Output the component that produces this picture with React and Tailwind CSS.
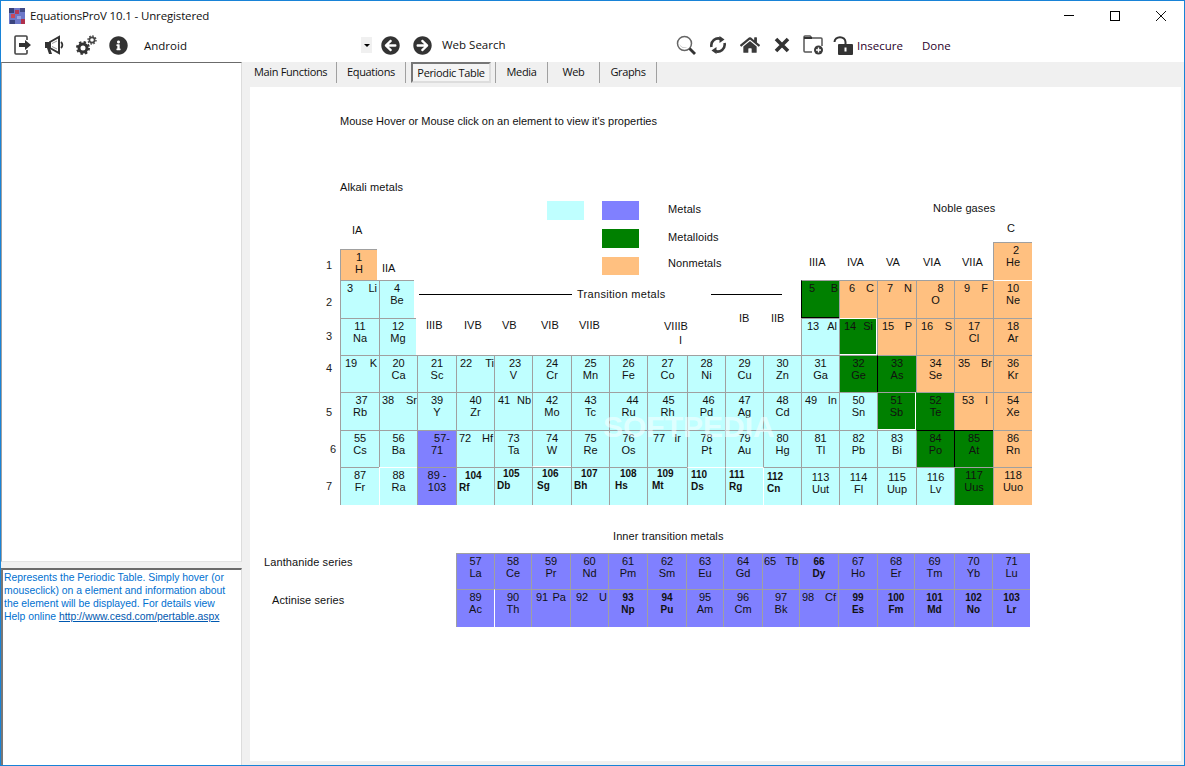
import React from 'react';
import { FaInfoCircle, FaArrowCircleLeft, FaArrowCircleRight, FaHome } from 'react-icons/fa';

const CY = 'bg-[#bfffff]';
const PU = 'bg-[#8080ff]';
const GR = 'bg-[#008000]';
const PE = 'bg-[#ffc080]';

// kinds: default = number over symbol, split = same line, bold = small bold
const c = (n, s, color, kind = '', extra = '', num = '', sym = '') => ({ n, s, color, kind, extra, num, sym });

const Cell = ({ n, s, color, kind, extra, num = '', sym = '' }) => {
  if (kind === 'split') {
    return (
      <div className={`${color} h-full flex justify-between border-t border-l border-[#a0a0a0] pt-px leading-[12px] ${extra}`}>
        <span>{n}</span>
        <span>{s}</span>
      </div>
    );
  }
  if (kind === 'bold') {
    return (
      <div className={`${color} h-full border-t border-l border-[#a0a0a0] pt-[2px] text-[10px] font-bold leading-[12px] ${extra}`}>
        <div className={num}>{n}</div>
        <div className={sym}>{s}</div>
      </div>
    );
  }
  return (
    <div className={`${color} h-full border-t border-l border-[#a0a0a0] pt-px text-center leading-[12px] ${extra}`}>
      <div className={num}>{n}</div>
      <div>{s}</div>
    </div>
  );
};

const RowLabel = ({ children, className }) => (
  <div className={`pl-[6px] text-[#222] ${className}`}>{children}</div>
);

const row2 = [c(3, 'Li', CY, 'split', 'pl-[6px] pr-[2px]'), c(4, 'Be', CY, '', 'w-[35px]')];
const row2r = [
  c(5, 'B', GR, 'split', 'pl-[7px] pr-px border-l-black border-b border-b-black'),
  c(6, 'C', PE, 'split', 'pl-[9px] pr-[3px]'),
  c(7, 'N', PE, 'split', 'pl-[9px] pr-[4px]'),
  c(8, 'O', PE, '', '', 'pl-[10px]'),
  c(9, 'F', PE, 'split', 'pl-[9px] pr-[5px]'),
  c(10, 'Ne', PE, '', 'border-t-white'),
];
const row3 = [c(11, 'Na', CY), c(12, 'Mg', CY, '', 'w-[37px]')];
const row3r = [
  c(13, 'Al', CY, 'split', 'pl-[5px] pr-[2px]'),
  c(14, 'Si', GR, 'split', 'pl-[4px] pr-[3px] border-t-white border-r border-r-white border-b border-b-white'),
  c(15, 'P', PE, 'split', 'pl-[4px] pr-[4px]'),
  c(16, 'S', PE, 'split', 'pl-[4px] pr-[2px]'),
  c(17, 'Cl', PE),
  c(18, 'Ar', PE),
];
const row4 = [
  c(19, 'K', CY, 'split', 'pl-[4px] pr-[2px]'), c(20, 'Ca', CY), c(21, 'Sc', CY), c(22, 'Ti', CY, 'split', 'pl-[3px]'), c(23, 'V', CY, '', '', 'pl-[3px]'), c(24, 'Cr', CY),
  c(25, 'Mn', CY), c(26, 'Fe', CY), c(27, 'Co', CY), c(28, 'Ni', CY), c(29, 'Cu', CY), c(30, 'Zn', CY), c(31, 'Ga', CY),
  c(32, 'Ge', GR), c(33, 'As', GR, '', 'border-l-black'), c(34, 'Se', PE), c(35, 'Br', PE, 'split', 'pl-[3px] pr-px'), c(36, 'Kr', PE),
];
const row5 = [
  c(37, 'Rb', CY, '', '', 'pl-[3px]'), c(38, 'Sr', CY, 'split', 'pl-[2px]'), c(39, 'Y', CY), c(40, 'Zr', CY), c(41, 'Nb', CY, 'split', 'pl-[3px] pr-px'), c(42, 'Mo', CY),
  c(43, 'Tc', CY), c(44, 'Ru', CY, '', '', 'pl-[8px]'), c(45, 'Rh', CY, '', '', 'pl-[2px]'), c(46, 'Pd', CY, '', '', 'pl-[4px]'), c(47, 'Ag', CY), c(48, 'Cd', CY), c(49, 'In', CY, 'split', 'pl-[3px] pr-[2px]'),
  c(50, 'Sn', CY), c(51, 'Sb', GR, '', 'border-r border-r-white border-b border-b-white'), c(52, 'Te', GR, '', 'border-l-transparent'),
  c(53, 'I', PE, 'split', 'pl-[7px] pr-[5px]'), c(54, 'Xe', PE),
];
const row6 = [
  c(55, 'Cs', CY), c(56, 'Ba', CY), c('57-', '71', PU, '', '', 'pl-[10px]'), c(72, 'Hf', CY, 'split', 'pl-[2px] pr-px'), c(73, 'Ta', CY), c(74, 'W', CY, '', 'border-b border-b-white'),
  c(75, 'Re', CY), c(76, 'Os', CY), c(77, 'Ir', CY, 'split', 'pl-[5px] pr-[6px]'), c(78, 'Pt', CY), c(79, 'Au', CY), c(80, 'Hg', CY), c(81, 'Tl', CY),
  c(82, 'Pb', CY), c(83, 'Bi', CY), c(84, 'Po', GR, '', 'border-t-black'), c(85, 'At', GR, '', 'border-t-black border-l-black'), c(86, 'Rn', PE),
];
const row7 = [
  c(87, 'Fr', CY), c(88, 'Ra', CY, '', 'border-l-white border-t-white'), c('89 -', '103', PU),
  c(104, 'Rf', CY, 'bold', '', 'pl-[8px]', 'pl-[2px]'),
  c(105, 'Db', CY, 'bold', 'pt-0!', 'pl-[8px]', 'pl-[2px]'),
  c(106, 'Sg', CY, 'bold', 'pt-0!', 'pl-[9px]', 'pl-[4px]'),
  c(107, 'Bh', CY, 'bold', 'pt-0!', 'pl-[9px]', 'pl-[2px]'),
  c(108, 'Hs', CY, 'bold', 'pt-0!', 'pl-[10px]', 'pl-[5px]'),
  c(109, 'Mt', CY, 'bold', 'pt-0!', 'pl-[9px]', 'pl-[4px]'),
  c(110, 'Ds', CY, 'bold', 'pt-px! border-t-white', 'pl-[3px]', 'pl-[3px]'),
  c(111, 'Rg', CY, 'bold', 'pt-px! border-t-white', 'pl-[3px]', 'pl-[3px]'),
  c(112, 'Cn', CY, 'bold', 'pt-[3px]! border-l-white', 'pl-[3px]', 'pl-[3px]'),
  c(113, 'Uut', CY, '', 'pt-[3px]!'), c(114, 'Fl', CY, '', 'pt-[3px]!'), c(115, 'Uup', CY, '', 'pt-[3px]!'), c(116, 'Lv', CY, '', 'pt-[3px]!'), c(117, 'Uus', GR), c(118, 'Uuo', PE),
];

const lanth = [
  c(57, 'La', PU), c(58, 'Ce', PU), c(59, 'Pr', PU), c(60, 'Nd', PU), c(61, 'Pm', PU), c(62, 'Sm', PU), c(63, 'Eu', PU), c(64, 'Gd', PU),
  c(65, 'Tb', PU, 'split', 'pl-px pr-px'), c(66, 'Dy', PU, 'bold', 'text-center'), c(67, 'Ho', PU), c(68, 'Er', PU), c(69, 'Tm', PU), c(70, 'Yb', PU), c(71, 'Lu', PU),
];
const actin = [
  c(89, 'Ac', PU), c(90, 'Th', PU, '', 'border-l-white'), c(91, 'Pa', PU, 'split', 'pl-[4px] pr-[4px]'), c(92, 'U', PU, 'split', 'pl-[5px] pr-px'), c(93, 'Np', PU, 'bold', 'text-center'),
  c(94, 'Pu', PU, 'bold', 'text-center'), c(95, 'Am', PU), c(96, 'Cm', PU), c(97, 'Bk', PU), c(98, 'Cf', PU, 'split', 'pl-[2px] pr-[2px]'),
  c(99, 'Es', PU, 'bold', 'text-center'), c(100, 'Fm', PU, 'bold', 'text-center'), c(101, 'Md', PU, 'bold', 'text-center'), c(102, 'No', PU, 'bold', 'text-center'), c(103, 'Lr', PU, 'bold', 'text-center'),
];

const ExitIcon = () => (
  <svg className="shrink-0" width="18" height="20" viewBox="0 0 18 20" fill="none">
    <path d="M13 5V2a1 1 0 0 0-1-1H2a1 1 0 0 0-1 1v16a1 1 0 0 0 1 1h10a1 1 0 0 0 1-1v-3" stroke="#444" strokeWidth="1.6" />
    <path d="M5 8h6V5l6 5-6 5v-3H5z" fill="#333" />
  </svg>
);

const HornIcon = () => (
  <svg className="shrink-0" width="20" height="20" viewBox="0 0 20 20" fill="none">
    <path d="M1 7h5v6H1z" fill="#333" />
    <path d="M6 7l9-5v16l-9-5z" stroke="#333" strokeWidth="2" fill="#fff" />
    <path d="M8 8.5l5-2.5M8 11.5l5 2.5" stroke="#999" strokeWidth="1" />
    <path d="M3 13l2 6h3l-2-6z" fill="#333" />
    <path d="M17 7a4 4 0 0 1 0 6" stroke="#333" strokeWidth="1.8" />
  </svg>
);

const GearsIcon = () => (
  <svg className="shrink-0" width="21" height="20" viewBox="0 0 21 20" fill="none">
    <circle cx="7" cy="13" r="4" stroke="#333" strokeWidth="3" />
    <circle cx="7" cy="13" r="6" stroke="#333" strokeWidth="2" strokeDasharray="2.4 2.3" />
    <circle cx="16" cy="5" r="2.6" stroke="#444" strokeWidth="1.6" />
    <circle cx="16" cy="5" r="4" stroke="#444" strokeWidth="1.4" strokeDasharray="1.6 1.5" />
  </svg>
);

const SearchIcon = () => (
  <svg className="shrink-0" width="20" height="20" viewBox="0 0 20 20" fill="none">
    <circle cx="8.5" cy="8.5" r="7" stroke="#666" strokeWidth="1.5" />
    <path d="M3.5 9a5 5 0 0 0 8 3a6 6 0 0 1-8-3z" fill="#aaa" />
    <path d="M13.5 13.5L19 19" stroke="#333" strokeWidth="2.8" />
  </svg>
);

const SyncIcon = () => (
  <svg className="shrink-0" width="18" height="18" viewBox="0 0 18 18" fill="none">
    <path d="M2.5 11A7 7 0 0 1 12 3" stroke="#3a3a3a" strokeWidth="2.6" />
    <path d="M10.5 0l5 3.5-5 3.5z" fill="#3a3a3a" />
    <path d="M15.5 7A7 7 0 0 1 6 15" stroke="#3a3a3a" strokeWidth="2.6" />
    <path d="M7.5 18l-5-3.5 5-3.5z" fill="#3a3a3a" />
  </svg>
);

const CrossIcon = () => (
  <svg className="shrink-0" width="16" height="16" viewBox="0 0 16 16" fill="none">
    <path d="M2 2l12 12M14 2L2 14" stroke="#333" strokeWidth="3.6" />
  </svg>
);

const FolderPlusIcon = () => (
  <svg className="shrink-0" width="21" height="20" viewBox="0 0 21 20" fill="none">
    <path d="M9 17H2a1 1 0 0 1-1-1V2a1 1 0 0 1 1-1h5l2 2h9a1 1 0 0 1 1 1v7" stroke="#555" strokeWidth="1.5" />
    <path d="M1 3h8" stroke="#333" strokeWidth="2" />
    <circle cx="15.5" cy="15" r="4.5" fill="#3a3a3a" />
    <path d="M13 15h5M15.5 12.5v5" stroke="#fff" strokeWidth="1.4" />
  </svg>
);

const UnlockIcon = () => (
  <svg className="shrink-0" width="20" height="19" viewBox="0 0 20 19" fill="none">
    <path d="M1.5 6A5.5 4.8 0 0 1 12.5 6V8" stroke="#333" strokeWidth="2" />
    <rect x="5" y="8" width="15" height="11" rx="1" fill="#333" />
    <rect x="11.5" y="11.5" width="2" height="4" fill="#fff" />
  </svg>
);

const AppLogo = () => (
  <svg width="16" height="16" viewBox="0 0 16 16">
    <rect width="16" height="16" fill="#6d78c8" />
    <rect x="0" y="0" width="5" height="5" fill="#37417a" />
    <rect x="6" y="2" width="4" height="4" fill="#b23a58" />
    <rect x="11" y="0" width="5" height="4" fill="#404a86" />
    <rect x="2" y="6" width="4" height="4" fill="#c8475a" />
    <rect x="8" y="8" width="4" height="3" fill="#9aa2e0" />
    <rect x="12" y="11" width="4" height="5" fill="#b0304c" />
    <rect x="1" y="12" width="5" height="4" fill="#3a447e" />
  </svg>
);

export default function App() {
  return (
    <div className="w-[1185px] h-[766px] overflow-hidden bg-white border border-[#1883d7] flex flex-col font-['Open_Sans',sans-serif] text-[11.5px] text-[#111]">
      {/* title bar */}
      <div className="h-[29px] shrink-0 flex items-center">
        <div className="ml-[8px]"><AppLogo /></div>
        <span className="ml-[5px] tracking-[-0.15px]">EquationsProV 10.1 - Unregistered</span>
        <div className="ml-auto flex items-center h-full">
          <div className="w-[46px] flex justify-center"><div className="w-[10px] h-px bg-black" /></div>
          <div className="w-[46px] flex justify-center"><div className="w-[10px] h-[10px] border border-black" /></div>
          <div className="w-[46px] flex justify-center">
            <svg width="10" height="10" viewBox="0 0 10 10"><path d="M0 0l10 10M10 0L0 10" stroke="#111" strokeWidth="1" /></svg>
          </div>
        </div>
      </div>

      {/* toolbar */}
      <div className="h-[32px] shrink-0 flex items-center pb-[2px]">
        <div className="ml-[13px] w-[18px]"><ExitIcon /></div>
        <div className="ml-[12px]"><HornIcon /></div>
        <div className="ml-[12px]"><GearsIcon /></div>
        <FaInfoCircle className="ml-[12px] shrink-0 text-[#333] text-[19px]" />
        <span className="ml-[16px] mt-[2px] w-[80px]">Android</span>
        <div className="ml-[137px] w-[11px] h-[16px] bg-[#f0f0f0] flex items-center justify-center">
          <div className="border-x-[3px] border-x-transparent border-t-[3px] border-t-black" />
        </div>
        <FaArrowCircleLeft className="ml-[9px] shrink-0 text-[#333] text-[19px]" />
        <FaArrowCircleRight className="ml-[13px] shrink-0 text-[#333] text-[19px]" />
        <span className="ml-[10px] w-[234px]">Web Search</span>
        <SearchIcon />
        <div className="ml-[13px]"><SyncIcon /></div>
        <FaHome className="ml-[13px] shrink-0 text-[#3a3a3a] text-[20px]" />
        <div className="ml-[14px]"><CrossIcon /></div>
        <div className="ml-[13px]"><FolderPlusIcon /></div>
        <div className="ml-[9px]"><UnlockIcon /></div>
        <span className="ml-[4px] mt-[2px] w-[44px] text-[#2a002a]">Insecure</span>
        <span className="ml-[21px] mt-[2px] text-[#2a002a]">Done</span>
      </div>

      {/* body */}
      <div className="flex-1 min-h-0 flex bg-[#f0f0f0]">
        {/* left panels */}
        <div className="w-[241px] shrink-0 flex flex-col">
          <div className="h-[500px] bg-white border-t border-t-[#6b6b6b] border-l border-l-[#a0a0a0] border-r border-r-[#dcdcdc] border-b border-b-[#e3e3e3]" />
          <div className="h-[6px]" />
          <div className="flex-1 bg-white border-t-2 border-t-[#6b6b6b] border-l-2 border-l-[#777] border-r border-r-[#dcdcdc] pl-px pr-[12px] pt-px font-['Liberation_Sans',sans-serif] text-[10.4px] leading-[13px] text-[#0070d0]">
            <p>Represents the Periodic Table. Simply hover (or mouseclick) on a element and information about the element will be displayed. For details view Help online <a className="underline text-[#0058b0]">http://www.cesd.com/pertable.aspx</a></p>
          </div>
        </div>

        {/* right side */}
        <div className="flex-1 min-w-0 flex flex-col pl-[3px] pb-[4px]">
          <div className="h-[25px] shrink-0 flex items-start text-[11px] leading-[20px] text-[#111] tracking-[-0.35px]">
            <div className="w-[92px] h-[21px] pl-[9px] border-r border-r-[#a0a0a0]">Main Functions</div>
            <div className="w-[69px] h-[21px] text-center border-r border-r-[#a0a0a0]">Equations</div>
            <div className="ml-[5px] w-[80px] h-[21px] text-center bg-[#f4f4f4] border-2 border-t-[#777] border-l-[#777] border-r-[#ddd] border-b-[#ddd] leading-[18px]">Periodic Table</div>
            <div className="ml-[4px] w-[53px] h-[21px] text-center border-l border-r border-[#a0a0a0]">Media</div>
            <div className="w-[52px] h-[21px] text-center border-r border-r-[#a0a0a0]">Web</div>
            <div className="w-[57px] h-[21px] text-center border-r border-r-[#a0a0a0]">Graphs</div>
          </div>

          <div className="relative flex-1 ml-[5px] mr-[3px] bg-white font-['Liberation_Sans',sans-serif] text-[11px] leading-[12px] text-[#111]">
            <div className="pl-[90px] pt-[28px]">Mouse Hover or Mouse click on an element to view it's properties</div>
            <div className="pl-[90px] pt-[54px] tracking-[0.1px]">Alkali metals</div>

            {/* top band: IA/H, legend, right hand labels and He */}
            <div className="ml-[70px] mt-[8px] w-[712px] h-[79px] flex">
              <div className="w-[97px] grid grid-cols-[20px_39px_38px] grid-rows-[48px_31px]">
                <div />
                <div className="pt-[23px] pl-[12px]">IA</div>
                <div />
                <RowLabel className="pt-[10px]">1</RowLabel>
                <Cell n={1} s="H" color={PE} kind="" extra="w-[37px]" />
                <div className="pt-[13px] pl-[3px]">IIA</div>
              </div>

              <div className="ml-[130px] flex">
                <div className={`w-[37px] h-[19px] ${CY}`} />
                <div className="ml-[18px] flex flex-col gap-[9px]">
                  <div className="flex h-[19px] items-center">
                    <div className={`w-[37px] h-[19px] ${PU}`} />
                    <span className="ml-[29px] -mt-[3px] tracking-[0.1px]">Metals</span>
                  </div>
                  <div className="flex h-[19px] items-center">
                    <div className={`w-[37px] h-[19px] ${GR}`} />
                    <span className="ml-[29px] -mt-[4px] tracking-[0.1px]">Metalloids</span>
                  </div>
                  <div className="flex h-[18px] items-center">
                    <div className={`w-[37px] h-[18px] ${PE}`} />
                    <span className="ml-[29px] -mt-[7px] tracking-[0.1px]">Nonmetals</span>
                  </div>
                </div>
              </div>

              <div className="ml-auto w-[231px] flex flex-col">
                <div className="h-[41px]">
                  <div className="pl-[132px] pt-[1px] tracking-[0.1px]">Noble gases</div>
                  <div className="pl-[206px] pt-[8px]">C</div>
                </div>
                <div className="h-[38px] flex">
                  <div className="w-[192px] flex pt-[14px]">
                    <span className="ml-[8px] w-[18px]">IIIA</span>
                    <span className="ml-[20px] w-[18px]">IVA</span>
                    <span className="ml-[21px] w-[16px]">VA</span>
                    <span className="ml-[21px] w-[18px]">VIA</span>
                    <span className="ml-[21px] w-[20px]">VIIA</span>
                  </div>
                  <div className="w-[39px]"><Cell n={2} s="He" color={PE} kind="" extra="" num="pl-[6px]" /></div>
                </div>
              </div>
            </div>

            {/* main table */}
            <div className="ml-[70px] grid grid-cols-[20px_39px_38px_39px_38px_38px_39px_38px_38px_40px_38px_38px_38px_38px_38px_39px_38px_39px_39px] grid-rows-[38px_37px_37px_38px_37px_38px] w-[712px]">
              <RowLabel className="pt-[16px]">2</RowLabel>
              {row2.map((x) => <Cell key={x.n} {...x} />)}
              <div className="col-span-10 row-span-2 flex flex-col">
                <div className="h-[28px] flex items-center pl-[2px]">
                  <div className="w-[153px] h-px bg-black" />
                  <span className="ml-[5px] w-[134px] tracking-[0.3px]">Transition metals</span>
                  <div className="w-[71px] h-px bg-black" />
                </div>
                <div className="flex">
                  <span className="ml-[9px] w-[16px] pt-[11px]">IIIB</span>
                  <span className="ml-[22px] w-[17px] pt-[11px]">IVB</span>
                  <span className="ml-[21px] w-[15px] pt-[11px]">VB</span>
                  <span className="ml-[24px] w-[17px] pt-[11px]">VIB</span>
                  <span className="ml-[21px] w-[20px] pt-[11px]">VIIB</span>
                  <div className="ml-[65px] w-[24px] pt-[11px] leading-[14px]">VIIIB<div className="pl-[15px]">I</div></div>
                  <span className="ml-[51px] w-[11px] pt-[4px]">IB</span>
                  <span className="ml-[21px] w-[14px] pt-[4px]">IIB</span>
                </div>
              </div>
              {row2r.map((x) => <Cell key={x.n} {...x} />)}

              <RowLabel className="pt-[12px]">3</RowLabel>
              {row3.map((x) => <Cell key={x.n} {...x} />)}
              {row3r.map((x) => <Cell key={x.n} {...x} />)}

              <RowLabel className="pt-[7px]">4</RowLabel>
              {row4.map((x) => <Cell key={x.n} {...x} />)}
              <RowLabel className="pt-[14px]">5</RowLabel>
              {row5.map((x) => <Cell key={x.n} {...x} />)}
              <RowLabel className="pt-[13px] pl-[10px]">6</RowLabel>
              {row6.map((x) => <Cell key={x.n} {...x} />)}
              <RowLabel className="pt-[13px]">7</RowLabel>
              {row7.map((x) => <Cell key={x.n} {...x} />)}
            </div>

            <div className="pl-[363px] pt-[25px] tracking-[0.1px]">Inner transition metals</div>

            <div className="mt-[11px] flex">
              <div className="w-[206px] shrink-0 tracking-[0.1px]">
                <div className="h-[36px] pl-[14px] pt-[3px]">Lanthanide series</div>
                <div className="pl-[22px] pt-[5px]">Actinise series</div>
              </div>
              <div className="grid grid-cols-[38px_37px_39px_38px_39px_39px_37px_39px_37px_39px_39px_37px_40px_38px_38px] grid-rows-[36px_38px]">
                {lanth.map((x) => <Cell key={x.n} {...x} />)}
                {actin.map((x) => <Cell key={x.n} {...x} />)}
              </div>
            </div>

            {/* watermark over the table */}
            <div className="absolute left-[353px] top-[320px] text-[30px] leading-[40px] font-bold text-white/50 pointer-events-none">SOFTPEDIA</div>
          </div>
        </div>
      </div>
    </div>
  );
}
